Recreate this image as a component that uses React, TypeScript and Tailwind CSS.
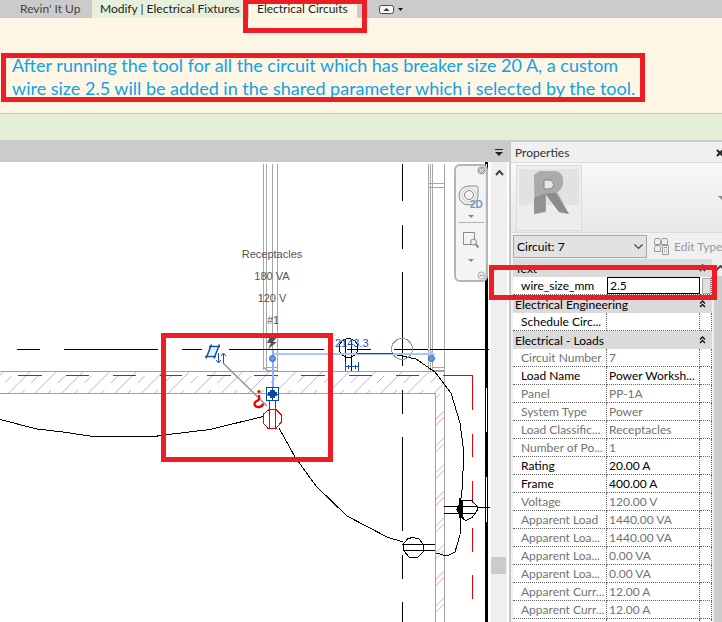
import type { ReactNode } from "react";

type Row = { name: string; value: string; editable?: boolean };

const loads: Row[] = [
  { name: "Circuit Number", value: "7" },
  { name: "Load Name", value: "Power Worksh...", editable: true },
  { name: "Panel", value: "PP-1A" },
  { name: "System Type", value: "Power" },
  { name: "Load Classific...", value: "Receptacles" },
  { name: "Number of Po...", value: "1" },
  { name: "Rating", value: "20.00 A", editable: true },
  { name: "Frame", value: "400.00 A", editable: true },
  { name: "Voltage", value: "120.00 V" },
  { name: "Apparent Load", value: "1440.00 VA" },
  { name: "Apparent Loa...", value: "1440.00 VA" },
  { name: "Apparent Loa...", value: "0.00 VA" },
  { name: "Apparent Loa...", value: "0.00 VA" },
  { name: "Apparent Curr...", value: "12.00 A" },
  { name: "Apparent Curr...", value: "12.00 A" },
];

const WALL_PERIOD = 26.6;
const wallHatch = Array.from({ length: 18 }, (_, i) => -18 + i * WALL_PERIOD);
const pinkHatch = Array.from({ length: 8 }, (_, i) => 419 + i * 26.7);

function Ribbon() {
  return (
    <header>
      <nav aria-label="Ribbon tabs" className="flex h-[18px] bg-[#cbcbcb] text-[12px] leading-4 text-[#222]">
        <button className="w-[92px] pl-5 text-left text-[#444] whitespace-nowrap">Revin' It Up</button>
        <button className="w-[151px] bg-[#e6f0da] pl-2 text-left whitespace-nowrap">Modify | Electrical Fixtures</button>
        <button className="ml-1.5 w-[108px] bg-[#fef6e4] pl-2 text-left whitespace-nowrap">Electrical Circuits</button>
        <button aria-label="Minimize ribbon" className="ml-[22px] flex items-center gap-1">
          <svg width="15" height="9" viewBox="0 0 15 9">
            <rect x=".5" y=".5" width="14" height="8" rx="2" fill="#f4f6fa" stroke="#444c5c" />
            <path d="M4.500 6 7.500 3l3 3z" fill="#333" />
          </svg>
          <svg width="5" height="3" viewBox="0 0 5 3"><path d="M0 0h5L2.500 3z" fill="#111" /></svg>
        </button>
      </nav>
      <div className="h-[95px] bg-[#fef6e4] px-3 pt-9">
        <p className="font-['Lato','Liberation_Sans',sans-serif] text-[18px] leading-[23px] whitespace-nowrap text-[#12a1e6]">
          After running the tool for all the circuit which has breaker size 20 A, a custom
          <br />
          wire size 2.5 will be added in the shared parameter which i selected by the tool.
        </p>
      </div>
      <div className="h-[27px] border-t border-[#c6c6c6] bg-[#e4efd6]" />
    </header>
  );
}

function Drawing() {
  return (
    <svg width="491" height="460" viewBox="0 162 491 460" fill="none" shapeRendering="crispEdges" className="block" role="img" aria-label="Electrical plan">
      {/* window frames */}
      <g stroke="#a6a6a6">
        <path d="M263.500 164v206M266.500 164v208M272.500 164v206M277.500 164v208" />
        <path d="M263.500 366l3 5M267 367.500h10v3h-10" />
        <path d="M428.500 164v206M430.500 164v208M432.500 164v208M444.500 164v208" />
        <path d="M433 183.500h11v4h-11M428 183h5M428 187h5M433 367.500h11v3h-11" />
      </g>
      {/* hatched walls */}
      <g stroke="#b5b0f2" shapeRendering="auto">
        {wallHatch.map((x) => (
          <g key={x}>
            <path d={`M${x} 393l21-21`} />
            <path d={`M${x - 4} 383l7-7M${x + 13} 393l3-3`} />
          </g>
        ))}
      </g>
      <path d="M445 371h46v23h-46z" fill="#fff" />
      <g stroke="#f3a9a9" shapeRendering="auto">
        <path d="M436 398l4-4" />
        {pinkHatch.map((y) => (
          <path key={y} d={`M436 ${y}l8-8M436 ${y + 6}l8-8`} />
        ))}
      </g>
      <path d="M0 371.500h445M0 393.500h436M444.500 371v251M435.500 393v229" stroke="#a0a0a0" />
      {/* red dashed run */}
      <path d="M18 375.500h24M66 375.500h23M113 375.500h23M160 375.500h22M207 375.500h24M254 375.500h24M301 375.500h24M349 375.500h23M396 375.500h23M443 375.500h30M472.500 375v35M472.500 434v23M472.500 481v22M472.500 528v24M472.500 575v24" stroke="#f00000" />
      {/* grid lines */}
      <path d="M17 349.500h23M64 349.500h94M182 349.500h20M229 349.500h95M347 349.500h24M394 349.500h95" stroke="#000" />
      <path d="M402.500 164v37M402.500 225v24M402.500 272v94M402.500 390v24M402.500 437v94M402.500 555v24M402.500 602v20" stroke="#000" />
      <path d="M485 162h3v460h-3z" fill="#000" />
      <path d="M486.500 164v5M486.500 388v44M486.500 477v45" stroke="#fff" />
      {/* circuit wires */}
      <g stroke="#000">
        <path d="M0 419.500 37 429l26 3 30 4.500h62l5-1 50-6 53-13" />
        <path d="M279 428l16 29 21 29 31 30 40 21 16 5" />
        <path d="M357 353.500h35l5 1.500 19 4 19 13 16 21 9 30 4 30-2 37-1 8-1 37-5 17-8 4-11-3" />
      </g>
      <circle cx="402" cy="349" r="10.500" stroke="#999" />
      {/* fixtures */}
      <g stroke="#000">
        <circle cx="348.500" cy="348" r="9.500" />
        <path d="M345.500 339v32M351.500 339v32" />
        <path d="M403 544.500l5-6 5-1 6 1.500 4 5v8l-5 5h-9l-5-6z" />
        <path d="M403 544.500h32M403 550.500h32" />
        <path d="M461 500.500h11l5 6v4l-5 7-6 3-5-3-4-8z" />
        <path d="M444 506.500h32M444 513.500h32M477 507.500h13" />
        <path d="M459 498l1 3h2v9l1 7h-4v-6l-1-3 1-3z" fill="#000" />
      </g>
      {/* dimension */}
      <path d="M345.500 362v9M358.500 362v9M346 366.500h12M348.500 365v4M355.500 365v4" stroke="#1450b4" />
      <path d="M273 353.500h160l-5-5" stroke="#a8c4fb" strokeWidth="2" />
      <path d="M357 353.500h36" stroke="#263f7c" />
      <text x="335" y="347" fontSize="11" fill="#1450b4" fontFamily="Liberation Sans, sans-serif">2143.3</text>
      {/* selected circuit */}
      <path d="M272.500 350v40" stroke="#90aefa" strokeWidth="2" />
      <g shapeRendering="auto">
        <circle cx="272.500" cy="358.500" r="3" fill="#629bec" stroke="#3169bd" />
        <circle cx="431.500" cy="358.500" r="3" fill="#629bec" stroke="#3169bd" />
        <path d="M223 363l44 43" stroke="#939393" strokeWidth="1.500" />
        <path d="M210 348h8l-3 7h-8z" fill="#e3f2f8" />
        <path d="M209 346.500h11M205 356.500h11M219.500 344.500l-5.500 14M211.500 344.500l-5.500 14" stroke="#1450a8" strokeWidth="1.500" />
        <path d="M218.500 353v9M216 360l2.500 3 2.500-3M223.500 363v-9M221 356l2.500-3 2.500 3" stroke="#1450b4" />
        <path d="M270 337l-3 6h4l-3 6 9-7h-4l4-5z" fill="#505050" />
      </g>
      <path d="M266.500 387.500h12v13h-12z" fill="#fff" stroke="#0b46ac" />
      <path d="M267 394h12M272.500 388v12" stroke="#0b46ac" />
      <path d="M268 392h9v4h-9zM270 390h5v8h-5z" fill="#0b46ac" />
      <g stroke="#f00000">
        <path d="M269.500 401v27M275.500 401v27" />
        <path d="M269 409.500h7l5 5v8l-5 6h-8l-5-6v-8z" />
      </g>
      <g shapeRendering="auto">
        <path d="M259 395v4c0 2-4.500 1.500-4.500 5 0 4 8 4 8.500-.5" stroke="#f00000" strokeWidth="2.400" />
        <circle cx="259" cy="391.500" r="1.600" fill="#f00000" />
      </g>
      <g fontSize="11" fill="#555" fontFamily="Liberation Sans, sans-serif" textAnchor="middle">
        <text x="272" y="258">Receptacles</text>
        <text x="272" y="280">180 VA</text>
        <text x="272" y="302">120 V</text>
        <text x="273" y="324">#1</text>
      </g>
    </svg>
  );
}

function ViewTools() {
  return (
    <div className="absolute top-0.5 right-[3px] flex h-[118px] w-[34px] flex-col items-center rounded-md border-2 border-[#b4b4b4] bg-[#f3f3f3]/95">
      <button aria-label="Close navigation bar" className="self-end">
        <svg width="9" height="9" viewBox="0 0 9 9"><circle cx="4.500" cy="4.500" r="4" fill="#aaa" /><path d="M2.500 2.500l4 4M6.500 2.500l-4 4" stroke="#fff" /></svg>
      </button>
      <button aria-label="2D steering wheel" className="mt-2.5 flex flex-col items-center gap-1.5">
        <svg width="26" height="24" viewBox="0 0 26 24" fill="none" stroke="#888">
          <path d="M11 1h7c1.500 0 2 .5 2 2v8a9.500 9.500 0 1 1-9-10z" fill="#f2f2f2" />
          <circle cx="11" cy="10" r="4.500" />
          <circle cx="11" cy="10" r="7" stroke="#ccc" />
          <text x="12" y="23" fontSize="10" fontWeight="bold" fill="#6f98bd" stroke="none" fontFamily="Liberation Sans, sans-serif">2D</text>
        </svg>
        <svg width="6" height="3" viewBox="0 0 6 3"><path d="M0 0h6L3 3z" fill="#888" /></svg>
      </button>
      <hr className="mt-1 w-[26px] border-[#b4b4b4]" />
      <button aria-label="Zoom region" className="mt-2 flex flex-col items-center gap-2.5">
        <svg width="18" height="18" viewBox="0 0 18 18" fill="none" stroke="#8a8a8a">
          <path d="M1.500 1.500h11v12h-11z" />
          <circle cx="11.500" cy="11" r="3" fill="#eee" />
          <path d="M13.500 13l3 3.500" strokeWidth="2" />
        </svg>
        <svg width="6" height="3" viewBox="0 0 6 3"><path d="M0 0h6L3 3z" fill="#888" /></svg>
      </button>
      <button aria-label="Navigation options" className="mt-auto self-end">
        <svg width="9" height="9" viewBox="0 0 9 9"><circle cx="4.500" cy="4.500" r="3.500" fill="#eee" stroke="#aaa" /><path d="M2.500 4.500h4" stroke="#999" /></svg>
      </button>
    </div>
  );
}

function GroupRow({ children }: { children: ReactNode }) {
  return (
    <tr className="bg-[#dadada]">
      <th colSpan={3} scope="colgroup" className="h-[18px] p-0 text-left font-normal">
        <div className="flex items-center justify-between pr-1.5 pl-0.5">
          {children}
          <svg width="7" height="8" viewBox="0 0 7 8" fill="none" stroke="#111" strokeWidth="1.300"><path d="M1 3.500 3.500 1 6 3.500M1 7l2.500-2.500L6 7" /></svg>
        </div>
      </th>
    </tr>
  );
}

function PropertyRow({ name, value, editable }: Row) {
  return (
    <tr className={editable ? "text-black" : "text-[#737373]"}>
      <th scope="row" className="h-[18px] border-r border-b border-dotted border-[#666] p-0 pl-2 text-left font-normal">{name}</th>
      <td className="border-r border-b border-dotted border-[#666] p-0 pl-0.5">{value}</td>
      <td className="border-r border-b border-dotted border-[#666] p-0" />
    </tr>
  );
}

function Properties() {
  return (
    <aside className="flex w-[213px] shrink-0 flex-col overflow-hidden border-l-2 border-[#c8c8c8] bg-[#f0f0f0] text-[12px]">
      <div className="flex h-5 shrink-0 items-center justify-between pt-0.5 pl-1">
        <h2 className="text-[#333]">Properties</h2>
        <button aria-label="Close properties" className="-mr-0.5">
          <svg width="8" height="8" viewBox="0 0 8 8" stroke="#222" strokeWidth="2"><path d="M1 1l6 6M7 1 1 7" /></svg>
        </button>
      </div>
      <div className="flex h-[71px] shrink-0 items-center justify-between border-y border-[#dcdcdc] bg-linear-to-b from-[#f8f8f8] to-[#e8e8e8] pl-[5px]">
        <svg width="66" height="66" viewBox="0 0 66 66">
          <rect x=".5" y=".5" width="65" height="65" fill="#eee" stroke="#dadada" />
          <path d="M3 4h60v36H34L3 40z" fill="#e2e2e2" />
          <path d="M3 41l20-4 40 12v14H3z" fill="#ececec" />
          <path d="M18 10l6-4h13c7 0 10 4 10 10 0 5-2 9-6 11l12 22-10-2-11-17h-2v17l-11 2z" fill="#a0a0a0" />
          <path d="M18 10l6-4h13c7 0 10 4 10 10 0 7-4 12-12 12h-7l-8 4z" fill="#ababab" />
          <path d="M28 15h5c6 0 6 9 0 9h-5z" fill="#e6e6e6" stroke="#808080" />
          <path d="M30 30l3-2h6l14 21-10-2z" fill="#8c8c8c" />
          <path d="M18 33l11-4v17l-11 3z" fill="#929292" />
        </svg>
        <svg width="4" height="4" viewBox="0 0 4 4"><path d="M0 0h8L4 4z" fill="#888" /></svg>
      </div>
      <div className="flex shrink-0 items-center pt-0.5 pb-px pl-0.5">
        <div className="relative shrink-0">
          <select aria-label="Selected circuit" className="h-[23px] w-[134px] appearance-none border border-[#a8a8a8] bg-[#e2e2e2] pl-[3px] text-black">
            <option>Circuit: 7</option>
          </select>
          <svg className="pointer-events-none absolute top-[9px] right-1" width="9" height="6" viewBox="0 0 9 6" fill="none" stroke="#444" strokeWidth="1.200"><path d="M.5.5l4 4 4-4" /></svg>
        </div>
        <button className="ml-1.5 flex items-center gap-1 whitespace-nowrap text-[#999]">
          <svg width="17" height="17" viewBox="0 0 17 17" fill="none" stroke="#999">
            <path d="M1.500 2.500l1-2h4l1 2v4h-6zM8.500 2.500l1-2h4l1 2v4h-6zM1.500 9.500l1-2h4l1 2v4h-6z" />
            <path d="M9.500 7.500h6v9h-6zM11 9.500h3M11 12h1m1 0h1M11 14h1m1 0h1" fill="#f0f0f0" />
          </svg>
          Edit Type
        </button>
      </div>
      <div className="flex min-h-0 flex-1 overflow-hidden pl-0.5">
        <table className="w-[199px] shrink-0 table-fixed border-separate border-spacing-0 self-start bg-white leading-[17px] whitespace-nowrap">
          <colgroup>
            <col className="w-[94px]" />
            <col className="w-[93px]" />
            <col className="w-3" />
          </colgroup>
          <tbody>
            <GroupRow>Text</GroupRow>
            <tr>
              <th scope="row" className="h-[18px] border-b border-dotted border-[#666] p-0 pl-2 text-left font-normal">
                <label htmlFor="wire-size">wire_size_mm</label>
              </th>
              <td className="border-b border-dotted border-[#666] p-0">
                <input id="wire-size" defaultValue="2.5" className="block h-[17px] w-full border border-black bg-white pl-0.5 leading-none outline-none" />
              </td>
              <td className="border-r border-b border-dotted border-[#666] p-0">
                <button aria-label="Associate parameter" className="ml-0.5 block h-4 w-[9px] border border-[#aaa] bg-[#e0e0e0]" />
              </td>
            </tr>
            <GroupRow>Electrical Engineering</GroupRow>
            <PropertyRow name="Schedule Circ..." value="" editable />
            <GroupRow>Electrical - Loads</GroupRow>
            {loads.map((row, i) => (
              <PropertyRow key={i} {...row} />
            ))}
            <PropertyRow name="" value="" />
          </tbody>
        </table>
        <div className="ml-0.5 flex-1 self-stretch bg-[#cdcdcd]">
          <div className="flex h-[17px] items-center bg-[#f0f0f0] pl-0.5">
            <svg width="9" height="6" viewBox="0 0 9 6" fill="none" stroke="#444" strokeWidth="2"><path d="M.5 5l4-4 4 4" /></svg>
          </div>
        </div>
      </div>
    </aside>
  );
}

export default function App() {
  return (
    <div className="relative flex h-screen flex-col overflow-hidden bg-[#cbcbcb] font-['Lato','Open_Sans',sans-serif]">
      <Ribbon />
      <div className="h-0.5 shrink-0" />
      <div className="flex min-h-0 flex-1">
        <main className="flex min-w-0 flex-1 flex-col">
          <div className="flex h-5 shrink-0 items-center justify-end pr-1.5">
            <button aria-label="View list">
              <svg width="8" height="7" viewBox="0 0 8 7"><path d="M0 0h8v1H0zM0 3h8L4 7z" fill="#222" /></svg>
            </button>
          </div>
          <div className="flex min-h-0 flex-1 border-r-2 border-white">
            <div className="relative min-w-0 flex-1 overflow-hidden bg-white">
              <Drawing />
              <ViewTools />
            </div>
            <div className="flex w-4 shrink-0 flex-col items-center bg-[#efefef] pt-2">
              <svg width="9" height="6" viewBox="0 0 9 6" fill="none" stroke="#444" strokeWidth="2"><path d="M1 5l3.500-4L8 5" /></svg>
              <div className="mt-[381px] h-[17px] w-full pr-px"><div className="h-full bg-[#cbcbcb]" /></div>
            </div>
          </div>
        </main>
        <Properties />
      </div>
      <div className="pointer-events-none absolute -top-px left-[243px] h-[34px] w-[124px] border-5 border-[#ee1c24]" />
      <div className="pointer-events-none absolute top-[53px] left-px h-[49px] w-[644px] border-5 border-[#ee1c24]" />
      <div className="pointer-events-none absolute top-[333px] left-[161px] h-[129px] w-[172px] border-5 border-[#ee1c24]" />
      <div className="pointer-events-none absolute top-[265px] left-[489px] h-[35px] w-[228px] border-5 border-[#ee1c24]" />
    </div>
  );
}
